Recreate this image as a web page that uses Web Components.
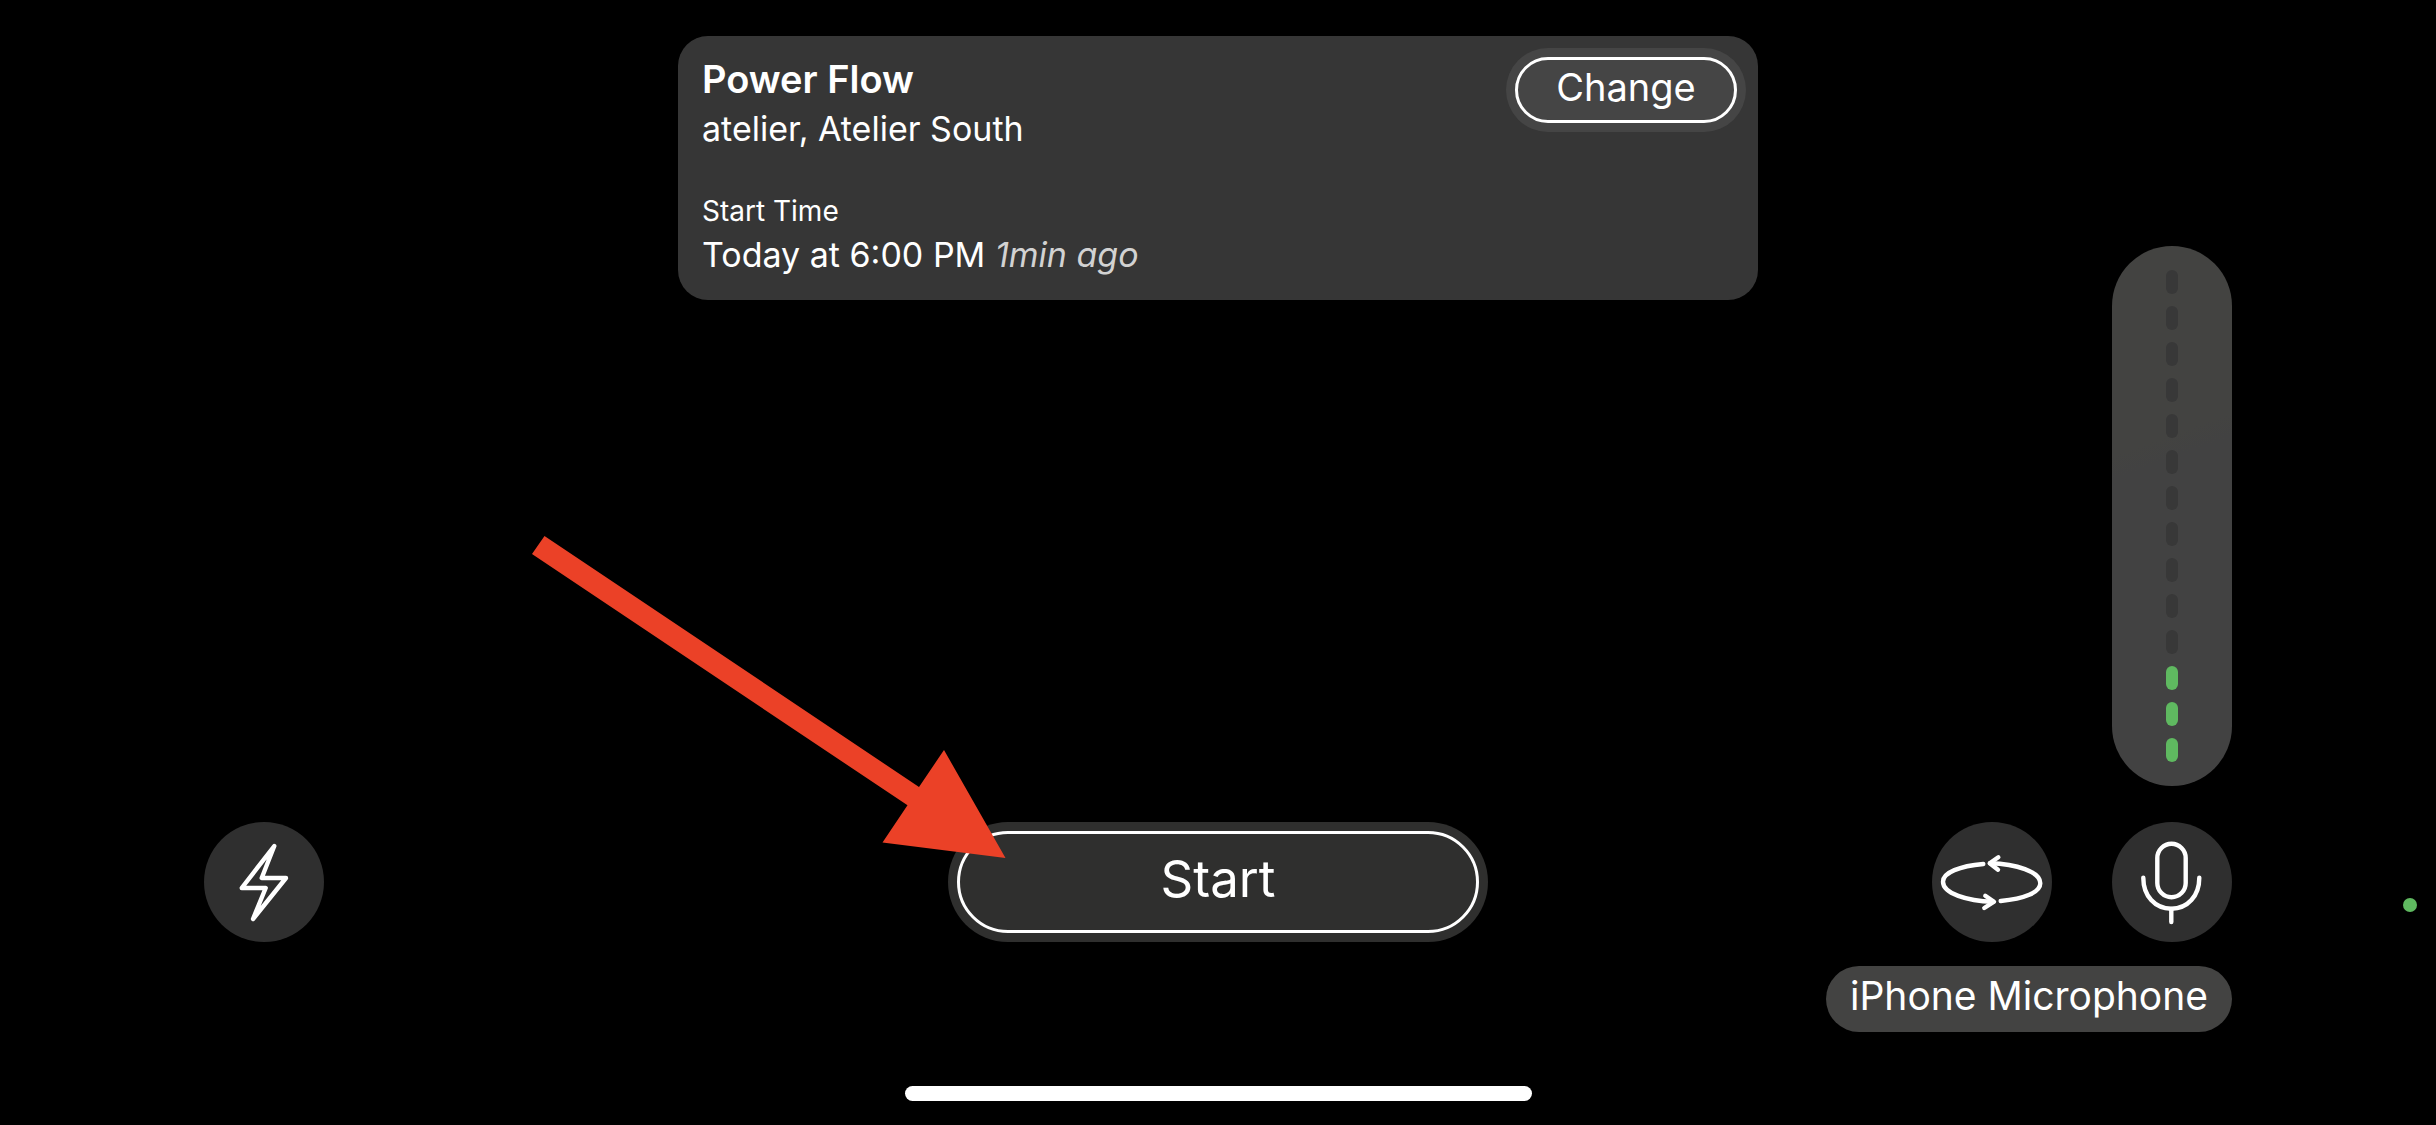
<!DOCTYPE html>
<html lang="en">
<head>
<meta charset="utf-8">
<meta name="viewport" content="width=device-width, initial-scale=1">
<title>Power Flow</title>
<style>
html, body {
  margin: 0;
  background: #000;
}

body {
  color: #fff;
  font-family: Inter, "Liberation Sans", Arial, sans-serif;
}
</style>
</head>
<body>
<camera-screen>
  <class-card slot="card">
    <span slot="name">Power Flow</span>
    <span slot="place">atelier, Atelier South</span>
    <span slot="label">Start Time</span>
    <span slot="time">Today at 6:00 PM</span>
    <span slot="ago">1min ago</span>
    <pill-button slot="action">Change</pill-button>
  </class-card>
  <level-meter slot="meter" total="14" value="3"></level-meter>
  <icon-button slot="left" icon="flash" label="Flash"></icon-button>
  <pill-button slot="start" large>Start</pill-button>
  <pointer-arrow slot="start"></pointer-arrow>
  <icon-button slot="right" icon="flip" label="Flip camera"></icon-button>
  <icon-button slot="right" icon="mic" label="Microphone"></icon-button>
  <source-label slot="source">iPhone Microphone</source-label>
</camera-screen>

<script>
class CameraScreen extends HTMLElement {
    connectedCallback() {
        this.attachShadow({mode: 'open'});
        this.shadowRoot.innerHTML = `
<style>
:host {
  position: relative;
  display: flex;
  flex-direction: column;
  box-sizing: border-box;
  min-height: 100vh;
  padding: 36px 0 24px;
}

main {
  flex: 1;
  display: grid;
  grid-template-columns: 1fr auto 1fr;
  grid-template-rows: auto 1fr auto auto;
  padding: 0 204px;
}

.card {
  grid-area: 1 / 1 / 2 / 4;
  justify-self: center;
}

.meter {
  grid-area: 1 / 3 / 3 / 4;
  place-self: end;
  padding-bottom: 36px;
}

.left {
  grid-area: 3 / 1;
}

.start {
  grid-area: 3 / 2;
  position: relative;
}

.right {
  grid-area: 3 / 3;
  display: flex;
  justify-content: flex-end;
  gap: 60px;
}

.source {
  grid-area: 4 / 3;
  justify-self: end;
  padding-top: 24px;
}

.home {
  align-self: center;
  width: 627px;
  height: 15px;
  margin-top: 54px;
  border-radius: 8px;
  background: #fff;
}

/* recording light, sits over the screen edge */
.light {
  position: absolute;
  right: 19px;
  bottom: 213px;
  width: 14px;
  height: 14px;
  border-radius: 50%;
  background: #5fb960;
}
</style>
<main>
  <div class="card"><slot name="card"></slot></div>
  <div class="meter"><slot name="meter"></slot></div>
  <div class="left"><slot name="left"></slot></div>
  <div class="start"><slot name="start"></slot></div>
  <div class="right"><slot name="right"></slot></div>
  <div class="source"><slot name="source"></slot></div>
</main>
<div class="home"></div>
<div class="light"></div>
        `;
    }
}

class ClassCard extends HTMLElement {
    connectedCallback() {
        this.attachShadow({mode: 'open'});
        this.shadowRoot.innerHTML = `
<style>
:host {
  display: flex;
  justify-content: space-between;
  align-items: flex-start;
  box-sizing: border-box;
  width: 1080px;
  max-width: 100%;
  padding: 12px 12px 22px 24px;
  border-radius: 30px;
  background: #363636;
}

.info {
  padding-top: 6px;
}

h1, p {
  margin: 0;
}

h1 {
  font-size: 38px;
  line-height: 50px;
  font-weight: 600;
}

p {
  font-size: 34px;
  line-height: 50px;
}

.label {
  margin-top: 36px;
  font-size: 28px;
  line-height: 42px;
}

.time {
  line-height: 46px;
}

em {
  color: #d2d2d2;
}
</style>
<div class="info">
  <h1><slot name="name"></slot></h1>
  <p><slot name="place"></slot></p>
  <p class="label"><slot name="label"></slot></p>
  <p class="time"><slot name="time"></slot> <em><slot name="ago"></slot></em></p>
</div>
<slot name="action"></slot>
        `;
    }
}

class PillButton extends HTMLElement {
    connectedCallback() {
        this.attachShadow({mode: 'open'});
        this.shadowRoot.innerHTML = `
<style>
:host {
  display: block;
  box-sizing: border-box;
  width: 240px;
  height: 84px;
  padding: 9px;
  border-radius: 60px;
  background: #454545;
}

:host([large]) {
  width: 540px;
  height: 120px;
  background: #2f2f2e;
}

button {
  display: block;
  box-sizing: border-box;
  width: 100%;
  height: 100%;
  padding: 0 0 6px;
  border: 3px solid #fff;
  border-radius: 60px;
  background: none;
  color: inherit;
  font: inherit;
  font-size: 38px;
  cursor: pointer;
}

:host([large]) button {
  padding-bottom: 8px;
  font-size: 51px;
}
</style>
<button type="button"><slot></slot></button>
        `;
    }
}

class LevelMeter extends HTMLElement {
    connectedCallback() {
        this.total = +(this.getAttribute('total') || 14);
        this.value = +(this.getAttribute('value') || 0);
        this.attachShadow({mode: 'open'});
        this.setAttribute('role', 'meter');
        this.setAttribute('aria-label', 'Input level');
        this.setAttribute('aria-valuemax', this.total);
        this.setAttribute('aria-valuenow', this.value);
        this.render();
    }

    render() {
        let bars = '';
        for (let i = this.total; i > 0; i--) {
            bars += `<i ${i <= this.value ? 'class="on"' : ''}></i>`;
        }
        this.shadowRoot.innerHTML = `
<style>
:host {
  display: flex;
  flex-direction: column;
  align-items: center;
  gap: 12px;
  box-sizing: border-box;
  width: 120px;
  padding: 24px 0;
  border-radius: 60px;
  background: linear-gradient(160deg, #434341 36%, #424242 40%);
}

i {
  width: 12px;
  height: 24px;
  border-radius: 6px;
  background: #383838;
}

.on {
  background: #5fb960;
}
</style>
${bars}
        `;
    }
}

const ICONS = {
    flash: '<path d="M70.3 24 57.7 56H82L49 97l12.7-31H37.7z"/>',
    flip: `
<path d="M51.3 42C28 44 11 50.5 11 59.7c0 11.8 24 19.3 50 20"/>
<path d="m53.3 73.7 8.7 6L52.3 86"/>
<path d="M68.7 79c23.3-2 39.6-8.5 39.6-17.7 0-11.8-24.3-19.3-50.3-20"/>
<path d="m66.3 35.3-8.6 6L66 47.7"/>`,
    mic: `
<rect x="45.3" y="21.8" width="28.4" height="53.4" rx="14.2"/>
<path d="M31.3 55.7c0 18.3 11.7 31 28 31s28-12.7 28-31"/>
<path d="M59.3 87v13"/>`
};

class IconButton extends HTMLElement {
    connectedCallback() {
        this.attachShadow({mode: 'open'});
        this.shadowRoot.innerHTML = `
<style>
:host {
  display: block;
  width: 120px;
  height: 120px;
}

button {
  display: block;
  width: 100%;
  height: 100%;
  padding: 0;
  border: 0;
  border-radius: 50%;
  background: #2f2f2f;
  color: inherit;
  cursor: pointer;
}

svg {
  display: block;
  fill: none;
  stroke: currentColor;
  stroke-width: 4.4;
  stroke-linecap: round;
  stroke-linejoin: round;
}
</style>
<button type="button" aria-label="${this.getAttribute('label')}">
  <svg viewBox="0 0 120 120" aria-hidden="true">${ICONS[this.getAttribute('icon')]}</svg>
</button>
        `;
    }
}

class SourceLabel extends HTMLElement {
    connectedCallback() {
        this.attachShadow({mode: 'open'});
        this.shadowRoot.innerHTML = `
<style>
:host {
  display: block;
  padding: 0 24px 6px;
  border-radius: 33px;
  background: #434342;
  font-size: 39px;
  line-height: 60px;
}
</style>
<slot></slot>
        `;
    }
}

// Red arrow laid over the screen, its tip on the start button
class PointerArrow extends HTMLElement {
    connectedCallback() {
        this.attachShadow({mode: 'open'});
        this.shadowRoot.innerHTML = `
<style>
:host {
  position: absolute;
  left: -416px;
  top: -286px;
  pointer-events: none;
}

svg {
  display: block;
  fill: #eb4127;
}
</style>
<svg width="474" height="322" viewBox="0 0 474 322" aria-hidden="true">
  <path d="M12.5 0 387 251l25-37 61.5 108-123-15.5 25-37.2L0 18z"/>
</svg>
        `;
    }
}

customElements.define('camera-screen', CameraScreen);
customElements.define('class-card', ClassCard);
customElements.define('pill-button', PillButton);
customElements.define('level-meter', LevelMeter);
customElements.define('icon-button', IconButton);
customElements.define('source-label', SourceLabel);
customElements.define('pointer-arrow', PointerArrow);
</script>
</body>
</html>
